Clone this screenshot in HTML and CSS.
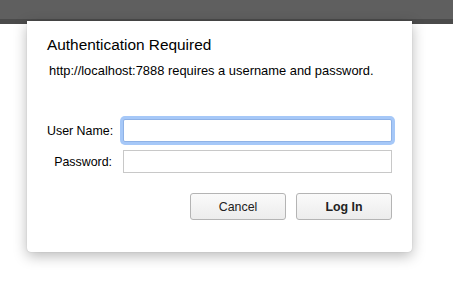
FILE: index.html
```html
<!DOCTYPE html>
<html>
<head>
    <title>Authentication Required</title>
    <link rel="stylesheet" href="styles.css">
</head>
<body>
    <div class="toolbar"></div>
    <div class="dialog">
        <h1 class="dialog-title">Authentication Required</h1>
        <p class="dialog-message">http://localhost:7888 requires a username and password.</p>
        <form class="login-form">
            <div class="field">
                <label for="username">User Name:</label>
                <input type="text" id="username" class="focused">
            </div>
            <div class="field">
                <label for="password">Password:</label>
                <input type="password" id="password">
            </div>
            <div class="actions">
                <button type="button" class="button">Cancel</button>
                <button type="submit" class="button default">Log In</button>
            </div>
        </form>
    </div>
</body>
</html>
```

FILE: styles.css
```css
body {
    font-family: "Liberation Sans", Arial, sans-serif;
    background-color: #fff;
    margin: 0;
    padding: 0;
    color: #000;
}
.toolbar {
    height: 19px;
    background-color: #5f5f5f;
    border-bottom: 5px solid #4b4b4b;
}
.dialog {
    position: absolute;
    left: 27px;
    top: 21px;
    width: 385px;
    height: 231px;
    box-sizing: border-box;
    padding: 15px 20px 0 20px;
    background-color: #fff;
    border-radius: 0 0 4px 4px;
    box-shadow: 0 4px 14px rgba(0, 0, 0, 0.28), 0 0 1px rgba(0, 0, 0, 0.25);
}
.dialog-title {
    font-size: 15.4px;
    font-weight: normal;
    margin: 0;
    line-height: 18px;
}
.dialog-message {
    font-size: 12.9px;
    margin: 9px 0 0 2px;
    line-height: 15px;
}
.login-form {
    margin-top: 41px;
}
.field {
    display: flex;
    align-items: center;
    margin-bottom: 8px;
}
.field label {
    width: 65px;
    flex-shrink: 0;
    text-align: right;
    font-size: 12.4px;
    margin-right: 11px;
    white-space: nowrap;
}
.field input {
    width: 269px;
    height: 23px;
    box-sizing: border-box;
    border: 1px solid #c8c8c8;
    margin: 0;
    padding: 2px 4px;
    font-size: 12px;
    outline: none;
}
.field input.focused {
    border-color: #8fb2e6;
    box-shadow: 0 0 0 3px #a6c8f8;
    border-radius: 2px;
}
.actions {
    display: flex;
    justify-content: flex-end;
    gap: 10px;
    margin-top: 20px;
}
.button {
    width: 96px;
    height: 27px;
    font-family: "Liberation Sans", Arial, sans-serif;
    font-size: 12.4px;
    color: #222;
    background: linear-gradient(#fafafa, #ececec);
    border: 1px solid #b4b4b4;
    border-radius: 3px;
}
.button.default {
    font-weight: bold;
}
```
